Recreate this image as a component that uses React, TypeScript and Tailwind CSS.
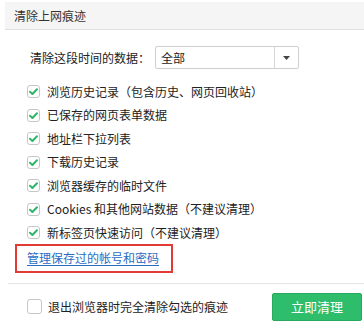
import React from "react";

const items = [
  { label: "浏览历史记录（包含历史、网页回收站）" },
  { label: "已保存的网页表单数据" },
  { label: "地址栏下拉列表" },
  { label: "下载历史记录" },
  { label: "浏览器缓存的临时文件" },
  { label: "Cookies 和其他网站数据（不建议清理）" },
  { label: "新标签页快速访问（不建议清理）" },
];

function CheckBox({ checked, size = 13 }: { checked: boolean; size?: number }) {
  return (
    <span
      className="flex shrink-0 items-center justify-center rounded-[3px] border border-[#c6c6c6] bg-white"
      style={{ width: size, height: size }}
    >
      {checked && (
        <svg width="11" height="11" viewBox="0 0 11 11">
          <path
            d="M2 5.8 L4.4 8 L9 3.2"
            fill="none"
            stroke="#2fb56a"
            strokeWidth="2"
            strokeLinecap="round"
            strokeLinejoin="round"
          />
        </svg>
      )}
    </span>
  );
}

export default function App() {
  return (
    <div
      className="h-[329px] w-[364px] overflow-hidden bg-white text-[12px] text-[#222]"
      style={{ fontFamily: '"Noto Sans CJK SC", "Noto Sans", sans-serif' }}
    >
      {/* Header */}
      <div className="ml-[5px] mt-[2px] flex h-[28px] items-center border-b border-[#dedede] bg-[#f5f5f5] pl-[9px] text-[#333]">
        清除上网痕迹
      </div>

      <div className="pl-[27px]">
        {/* Time range */}
        <div className="mt-[16px] flex h-[23px] items-center">
          <span className="w-[128px] pl-[3px]">清除这段时间的数据：</span>
          <div className="flex h-[23px] w-[144px] items-stretch rounded-[2px] border border-[#cfcfcf] bg-white">
            <span className="flex flex-1 items-center pl-[5px]">全部</span>
            <span className="flex w-[24px] items-center justify-center border-l border-[#d6d6d6]">
              <svg width="7" height="4" viewBox="0 0 7 4">
                <path d="M0 0 L7 0 L3.5 4 Z" fill="#444" />
              </svg>
            </span>
          </div>
        </div>

        {/* Checkbox list */}
        <div className="mt-[11px] flex flex-col">
          {items.map((it) => (
            <div key={it.label} className="flex h-[23.5px] items-center gap-[7px]">
              <CheckBox checked />
              <span>{it.label}</span>
            </div>
          ))}
        </div>

        {/* Link */}
        <div className="-ml-[12px] mt-[-1px] flex h-[29px] w-[158px] items-center border-2 border-[#e23a35] pl-[10px]">
          <a href="#" className="text-[#2a6cc4] underline underline-offset-2">
            管理保存过的帐号和密码
          </a>
        </div>
      </div>

      {/* Footer */}
      <div className="ml-[8px] mt-[10px] border-t border-[#e6e6e6]">
        <div className="mt-[9px] flex h-[28px] items-center pl-[19px] pr-[2px]">
          <CheckBox checked={false} size={15} />
          <span className="ml-[6px]">退出浏览器时完全清除勾选的痕迹</span>
          <button className="ml-auto flex h-[28px] w-[90px] items-center justify-center rounded-[2px] border border-[#27a95f] bg-[#2dbd6b] text-[13px] text-white">
            立即清理
          </button>
        </div>
      </div>
    </div>
  );
}
